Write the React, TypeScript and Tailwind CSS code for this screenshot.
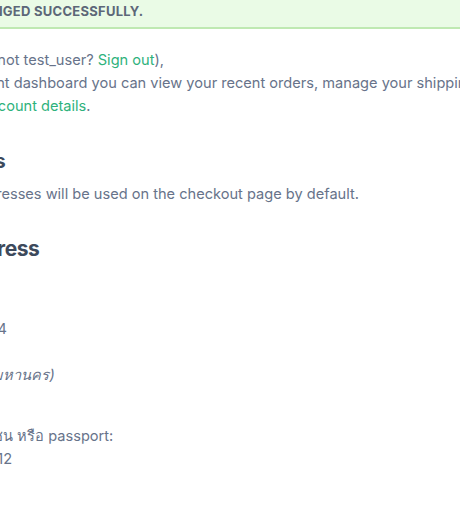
export default function App() {
  return (
    <div
      className="w-[460px] h-[530px] overflow-hidden bg-white text-[#67738a]"
      style={{ fontFamily: "Inter, 'Noto Sans', 'Liberation Sans', sans-serif" }}
    >
      <div className="-mt-[4px]">
        <div className="bg-[#eafbe6] border-b-2 border-[#bfe9b2] h-[33px] flex items-center overflow-hidden">
          <span className="-ml-[168px] whitespace-nowrap text-[13px] font-bold uppercase tracking-[0.02em] text-[#5c6778]">
            Account details changed successfully.
          </span>
        </div>
      </div>

      <div className="-ml-[114px] w-[760px] text-[14.6px] leading-[23px] whitespace-nowrap">
        <p className="mt-[20px]">
          Hello test_user (not test_user? <a className="text-[#2eb27c]">Sign out</a>),
        </p>
        <p className="-ml-[6px]">
          From your account dashboard you can view your recent orders, manage your shipping and billing addresses, and edit your
          <br />
          password and <a className="text-[#2eb27c]">account details</a>.
        </p>

        <h2 className="mt-[29px] ml-[15px] text-[20px] font-bold text-[#3d4a5c] leading-[28px]">Addresses</h2>
        <p className="mt-[8px] -ml-[13px]">The following addresses will be used on the checkout page by default.</p>

        <h3 className="mt-[28px] ml-[9px] text-[21px] tracking-[-0.02em] font-bold text-[#3d4a5c] leading-[30px]">
          Billing address
        </h3>

        <address className="mt-[8px] not-italic">
          test user
          <br />
          99/1 Moo 2
          <br />
          <span className="ml-[5px]">Sukhumvit, Soi 4</span>
          <br />
          Khlong Toei
          <br />
          <span className="italic">กรุงเทพ (กรุงเทพมหานคร)</span>
          <br />
          10110
        </address>
        <p className="mt-[15px] ml-[14px]">
          <span>เลขบัตรประชาชน หรือ</span> passport:
          <br />
          <span className="-ml-[4px]">12345678901212</span>
        </p>
      </div>
    </div>
  );
}
